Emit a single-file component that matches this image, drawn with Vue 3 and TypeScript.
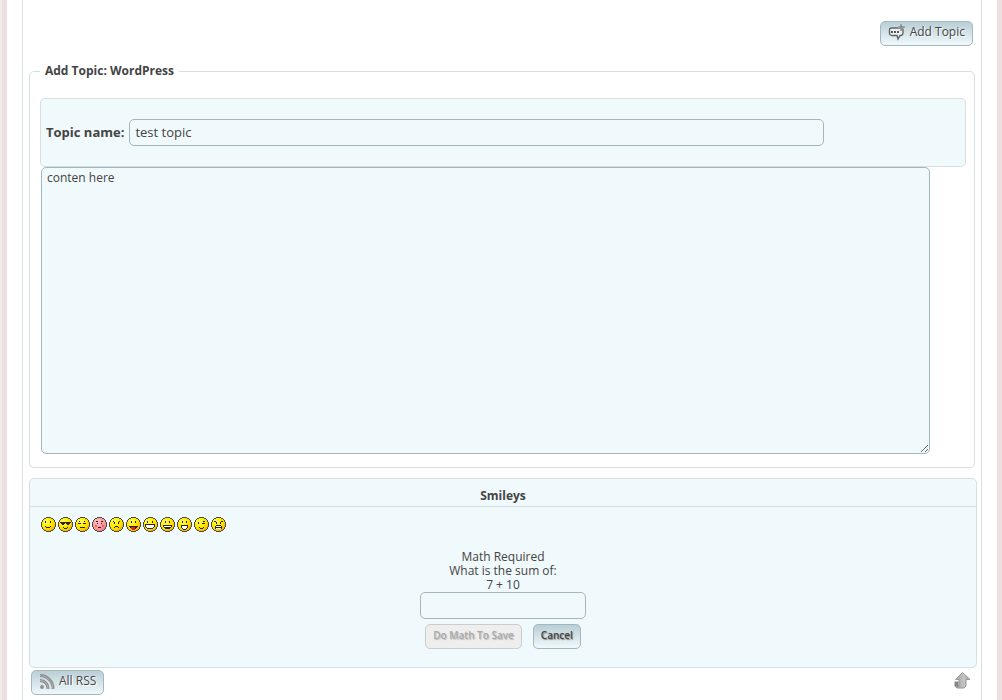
<script setup lang="ts">
import { ref } from 'vue'

interface Smiley {
  name: string
  tone: 'yellow' | 'pink'
  dark: string
  white?: string
  red?: string
}

const topic = ref('test topic')
const content = ref('conten here')
const answer = ref('')

const smileys: Smiley[] = [
  { name: 'Smile', tone: 'yellow', dark: 'M4 4h1v2h-1zM9 4h1v2h-1zM4 9h1v1h-1zM5 10h4v1h-4zM9 9h1v1h-1z' },
  { name: 'Cool', tone: 'yellow', dark: 'M2 5h11v1h-11zM3 6h4v1h-4zM8 6h4v1h-4zM4 7h2v1h-2zM9 7h2v1h-2zM5 10h1v1h-1zM6 11h3v1h-3zM9 10h1v1h-1z' },
  { name: 'Bored', tone: 'yellow', dark: 'M3 6h3v1h-3zM8 6h3v1h-3zM4 4h1v1h-1zM9 4h1v1h-1zM5 10h5v1h-5z' },
  { name: 'Embarrassed', tone: 'pink', dark: 'M4 4h2v1h-2zM9 4h2v1h-2zM5 6h1v1h-1zM9 6h1v1h-1zM6 10h3v1h-3z', red: 'M3 8h2v2h-2zM10 8h2v2h-2z' },
  { name: 'Sad', tone: 'yellow', dark: 'M5 5h1v2h-1zM9 5h1v2h-1zM4 4h1v1h-1zM10 4h1v1h-1zM6 9h3v1h-3zM5 10h1v1h-1zM9 10h1v1h-1z' },
  { name: 'Tongue', tone: 'yellow', dark: 'M5 4h1v2h-1zM9 4h1v2h-1zM3 9h9v1h-9zM4 10h7v1h-7zM5 11h5v1h-5z', red: 'M5 10h4v1h-4zM5 11h4v1h-4zM6 12h3v1h-3z' },
  { name: 'Grin', tone: 'yellow', dark: 'M4 4h1v2h-1zM9 4h1v2h-1zM2 7h10v1h-10zM2 8h1v2h-1zM11 8h1v2h-1zM3 10h1v1h-1zM10 10h1v1h-1zM4 11h6v1h-6z', white: 'M3 8h8v2h-8zM4 10h6v1h-6z' },
  { name: 'Laugh', tone: 'yellow', dark: 'M5 4h1v2h-1zM9 4h1v2h-1zM3 8h9v1h-9zM3 9h1v1h-1zM11 9h1v1h-1zM4 10h7v1h-7zM5 11h5v1h-5z', white: 'M4 9h7v1h-7z' },
  { name: 'Surprised', tone: 'yellow', dark: 'M5 4h1v2h-1zM9 4h1v2h-1zM4 8h7v1h-7zM4 9h1v2h-1zM10 9h1v2h-1zM5 11h1v1h-1zM9 11h1v1h-1zM6 12h3v1h-3z', white: 'M5 9h5v2h-5zM6 11h3v1h-3z' },
  { name: 'Wink', tone: 'yellow', dark: 'M4 5h1v2h-1zM8 6h3v1h-3zM9 4h2v1h-2zM5 10h1v1h-1zM6 11h3v1h-3zM9 10h1v1h-1z' },
  { name: 'Angry', tone: 'yellow', dark: 'M3 4h2v1h-2zM5 5h1v2h-1zM9 5h1v2h-1zM10 4h2v1h-2zM5 8h5v1h-5zM4 9h1v3h-1zM10 9h1v3h-1zM5 10h5v1h-5z', white: 'M5 9h5v1h-5zM5 11h5v1h-5z' },
]
</script>

<template>
  <div class="page">
    <main class="sheet">
      <div class="toolbar">
        <button type="button" class="btn nav">
          <svg class="icon" width="17" height="17" viewBox="0 0 17 17" aria-hidden="true">
            <path d="M3.500 4h9q2.500 0 2.500 2v3q0 2-2 2.500h-1l-2 3.500-1-3.500h-5q-2.500 0-2.500-2.500v-3q0-2 2-2z" fill="#eef1f2" stroke="#5d6366" stroke-width="1.400" />
            <path d="M3 7h2v2H3zM6 7h2v2H6zM9 7h2v2H9z" fill="#555" />
            <path d="M12 0h2v2h3v2h-3v3h-2V4h-2V2h2z" fill="#8a8a8a" stroke="#e4eaec" stroke-width="0.300" />
          </svg>
          Add Topic
        </button>
      </div>

      <fieldset class="topic">
        <legend>Add Topic: WordPress</legend>
        <div class="name-row">
          <label for="topic-name">Topic name:</label>
          <input id="topic-name" v-model="topic" type="text">
        </div>
        <textarea v-model="content" aria-label="Topic content" spellcheck="false"></textarea>
      </fieldset>

      <section class="panel">
        <h2>Smileys</h2>
        <div class="smileys">
          <button v-for="s in smileys" :key="s.name" type="button" class="smiley" :aria-label="s.name">
            <svg width="15" height="15" viewBox="0 0 15 15" shape-rendering="crispEdges" aria-hidden="true">
              <defs>
                <radialGradient :id="'face-' + s.name" cx="0.35" cy="0.3" r="0.8">
                  <stop offset="0" :stop-color="s.tone === 'pink' ? '#ffc4c4' : '#fff880'" />
                  <stop offset="0.4" :stop-color="s.tone === 'pink' ? '#ffa4a8' : '#fff000'" />
                  <stop offset="0.7" :stop-color="s.tone === 'pink' ? '#f99398' : '#ffd800'" />
                  <stop offset="1" :stop-color="s.tone === 'pink' ? '#e8767e' : '#eea000'" />
                </radialGradient>
              </defs>
              <path d="M5 0h5v1h2v1h1v1h1v2h1v5h-1v2h-1v1h-1v1h-2v1h-5v-1h-2v-1h-1v-1h-1v-2h-1v-5h1v-2h1v-1h1v-1h2z" fill="#4a4a48" />
              <path d="M5 1h5v1h2v1h1v2h1v5h-1v2h-1v1h-2v1h-5v-1h-2v-1h-1v-2h-1v-5h1v-2h1v-1h2z" :fill="'url(#face-' + s.name + ')'" />
              <path :d="s.dark" fill="#2b2410" />
              <path v-if="s.white" :d="s.white" fill="#fff" />
              <path v-if="s.red" :d="s.red" :fill="s.tone === 'pink' ? '#f2616d' : '#f02018'" />
            </svg>
          </button>
        </div>
        <form class="math" @submit.prevent>
          <label for="math-answer">Math Required<br>What is the sum of:<br>7 + 10</label>
          <input id="math-answer" v-model="answer" type="text">
          <div class="actions">
            <button type="submit" class="btn small" disabled>Do Math To Save</button>
            <button type="button" class="btn small">Cancel</button>
          </div>
        </form>
      </section>

      <footer class="foot">
        <button type="button" class="btn nav rss">
          <svg class="icon" width="16" height="17" viewBox="0 0 16 17" aria-hidden="true">
            <g fill="none" stroke="#898989" stroke-width="3">
              <path d="M1 2.500a13 13 0 0 1 13 13.500" />
              <path d="M1 7.500a8 8 0 0 1 8 8.500" />
            </g>
            <g fill="none" stroke="#b5b5b5">
              <path d="M1 2.500a13 13 0 0 1 13 13.500" />
              <path d="M1 7.500a8 8 0 0 1 8 8.500" />
            </g>
            <circle cx="3" cy="14" r="2" fill="#929292" />
          </svg>
          All RSS
        </button>
        <a href="#" class="top" aria-label="Back to top">
          <svg width="17" height="17" viewBox="0 0 17 17" aria-hidden="true">
            <defs>
              <linearGradient id="arrow" x1="0" y1="0" x2="1" y2="0">
                <stop offset="0" stop-color="#a0a0a0" />
                <stop offset="0.600" stop-color="#c6c6c6" />
                <stop offset="1" stop-color="#909090" />
              </linearGradient>
            </defs>
            <path d="M.500 9.500h4v4h1v2.500h-3l-2-2z" fill="#858585" />
            <path d="M8.500.500l7.500 7h-4v6.500l-2 2H3l-1-1.500h3V7.500H1.500z" fill="url(#arrow)" stroke="#999" stroke-width="1" />
          </svg>
        </a>
      </footer>
    </main>
  </div>
</template>

<style>
body {
  margin: 0;
  background: #ededed;
}
</style>

<style scoped>
.page {
  min-height: 100vh;
  box-sizing: border-box;
  display: flex;
  margin-left: 2px;
  padding: 0 15px;
  background: #fff;
  border: solid #ede0e0;
  border-width: 0 5px;
  font: 12px/14px "Open Sans", "Noto Sans", sans-serif;
  color: #444;
}

.sheet {
  flex: 1;
  min-width: 0;
  box-sizing: border-box;
  border: solid #d7dfe1;
  border-width: 0 1px;
  padding: 21px 4px 0 6px;
}

input,
textarea,
button {
  font: inherit;
  color: inherit;
  box-sizing: border-box;
}

input,
textarea {
  display: block;
  background: #f0f9fb;
  border: 1px solid #a3b7bf;
  border-radius: 5px;
  outline: none;
}

.btn {
  display: inline-flex;
  align-items: center;
  height: 25px;
  padding: 0 7px;
  border: 1px solid #a3b7bf;
  border-radius: 5px;
  background: linear-gradient(#b9ced6, #f0f9fb);
  text-shadow: 1px 1px 0 #fff;
}

.nav {
  gap: 5px;
  padding-bottom: 3px;
}

.icon {
  flex: none;
}

.toolbar {
  display: flex;
  justify-content: flex-end;
  padding-right: 4px;
}

.topic {
  margin: 18px 2px 0 0;
  padding: 20px 8px 13px 10px;
  border: 1px solid #d7dfe1;
  border-radius: 5px;
  min-width: 0;
}

.topic legend {
  padding: 0 5px;
  font-weight: 700;
  line-height: 14px;
}

.name-row {
  display: flex;
  align-items: center;
  gap: 5px;
  height: 69px;
  box-sizing: border-box;
  padding: 0 5px;
  border: 1px solid #d7dfe1;
  border-radius: 5px;
  background: #f0f9fb;
  font-size: 13px;
}

.name-row label {
  padding-bottom: 2px;
  font-weight: 700;
}

.name-row input {
  width: 76%;
  height: 27px;
  padding: 0 5px 2px;
}

.topic textarea {
  width: 96%;
  height: 287px;
  margin-left: 1px;
  padding: 3px 5px;
}

.panel {
  margin-top: 10px;
  padding-bottom: 18px;
  border: 1px solid #d7dfe1;
  border-radius: 5px;
  background: #f0f9fb;
}

.panel h2 {
  margin: 0;
  padding: 10px 0 3px;
  border-bottom: 1px solid #d7dfe1;
  font-size: 12px;
  line-height: 14px;
  font-weight: 700;
  text-align: center;
}

.smileys {
  display: flex;
  gap: 2px;
  padding: 10px 11px 0;
}

.smiley {
  display: block;
  width: 15px;
  height: 15px;
  padding: 0;
  border: 0;
  background: none;
}

.smiley svg {
  display: block;
}

.math {
  display: flex;
  flex-direction: column;
  align-items: center;
  margin-top: 18px;
  text-align: center;
}

.math input {
  width: 166px;
  height: 27px;
  padding: 0 5px;
}

.actions {
  display: flex;
  gap: 11px;
  margin-top: 5px;
}

.small {
  padding-bottom: 3px;
  font-size: 10px;
  font-weight: 600;
  text-shadow: 1px 1px 1px #888;
}

.small:disabled {
  background: #eee;
  border-color: #ccc;
  color: #aaa;
  text-shadow: 1px 1px 1px #bbb;
}

.foot {
  display: flex;
  justify-content: space-between;
  padding: 2px 6px 0 2px;
}

.rss {
  gap: 4px;
}

.top {
  padding-top: 2px;
}

.top svg {
  display: block;
}
</style>
